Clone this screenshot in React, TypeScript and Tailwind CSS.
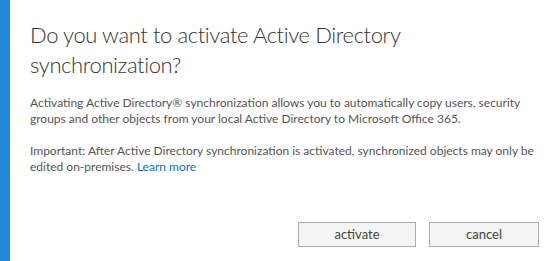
export default function App() {
  return (
    <div className="flex h-[261px] w-[560px] bg-white" style={{ fontFamily: 'Lato, "Open Sans", sans-serif' }}>
      {/* accent bar */}
      <div className="w-[10px] shrink-0 bg-[#2488d8]" />

      <div className="flex flex-1 flex-col pl-[20px] pr-[21px]">
        <h1 className="mt-[20px] text-[22px] font-light leading-[30px] tracking-[-0.4px] text-[#333333]">
          Do you want to activate Active Directory
          <br />
          synchronization?
        </h1>

        <p className="mt-[15px] text-[12px] leading-[16px] text-[#555555]">
          Activating Active Directory® synchronization allows you to automatically copy users, security
          <br />
          groups and other objects from your local Active Directory to Microsoft Office 365.
        </p>

        <p className="mt-[16px] text-[12px] leading-[16px] text-[#555555]">
          Important: After Active Directory synchronization is activated, synchronized objects may only be
          <br />
          edited on-premises. <a className="text-[#0072c6]" href="#">Learn more</a>
        </p>

        <div className="mt-auto mb-[14px] flex justify-end gap-[13px]">
          <button className="h-[25px] w-[118px] border border-[#ababab] bg-[#f4f4f4] text-[13px] text-[#444444]">
            activate
          </button>
          <button className="h-[25px] w-[110px] border border-[#ababab] bg-[#f4f4f4] text-[13px] text-[#444444]">
            cancel
          </button>
        </div>
      </div>
    </div>
  );
}
